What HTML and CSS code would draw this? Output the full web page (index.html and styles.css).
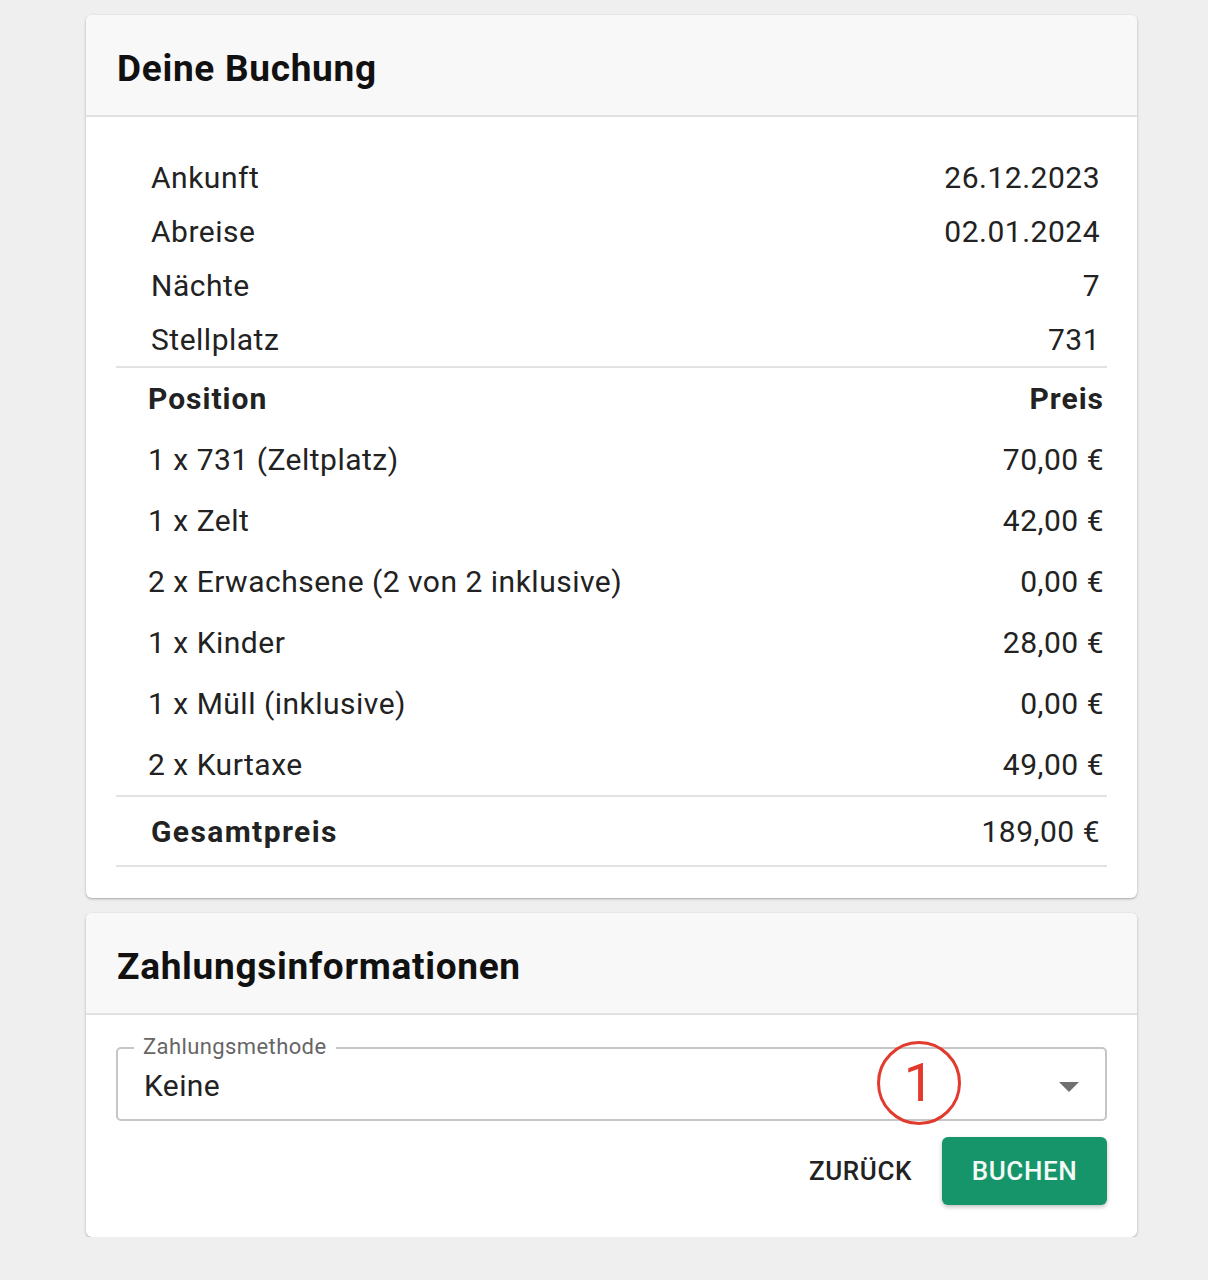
FILE: index.html
```html
<!DOCTYPE html>
<html lang="de">
<head>
<meta charset="utf-8">
<title>Buchung</title>
<link rel="stylesheet" href="styles.css">
</head>
<body>
<main class="page">
  <section class="card">
    <header class="card-header"><h2 class="card-title">Deine Buchung</h2></header>
    <div class="card-body">
      <div class="info">
        <div class="info-row"><span>Ankunft</span><span>26.12.2023</span></div>
        <div class="info-row"><span>Abreise</span><span>02.01.2024</span></div>
        <div class="info-row"><span>Nächte</span><span>7</span></div>
        <div class="info-row"><span>Stellplatz</span><span>731</span></div>
      </div>
      <div class="positions">
        <div class="pos-row pos-head"><span>Position</span><span>Preis</span></div>
        <div class="pos-row"><span>1 x 731 (Zeltplatz)</span><span>70,00 €</span></div>
        <div class="pos-row"><span>1 x Zelt</span><span>42,00 €</span></div>
        <div class="pos-row"><span>2 x Erwachsene (2 von 2 inklusive)</span><span>0,00 €</span></div>
        <div class="pos-row"><span>1 x Kinder</span><span>28,00 €</span></div>
        <div class="pos-row"><span>1 x Müll (inklusive)</span><span>0,00 €</span></div>
        <div class="pos-row"><span>2 x Kurtaxe</span><span>49,00 €</span></div>
      </div>
      <div class="total-row"><span class="total-label">Gesamtpreis</span><span>189,00 €</span></div>
    </div>
  </section>

  <section class="card">
    <header class="card-header"><h2 class="card-title">Zahlungsinformationen</h2></header>
    <div class="card-body pay-body">
      <div class="select">
        <span class="select-label">Zahlungsmethode</span>
        <span class="select-value">Keine</span>
        <span class="select-arrow"></span>
        <span class="marker">1</span>
      </div>
      <div class="actions">
        <button class="btn btn-text">ZURÜCK</button>
        <button class="btn btn-primary">BUCHEN</button>
      </div>
    </div>
  </section>
</main>
</body>
</html>
```

FILE: styles.css
```css
* { box-sizing: border-box; }
html, body { margin: 0; padding: 0; }
body {
  background: #efefef;
  font-family: Roboto, "Liberation Sans", Arial, sans-serif;
  color: #222;
}
.page {
  width: 1051px;
  margin-left: 86px;
  padding-top: 15px;
  display: flex;
  flex-direction: column;
  gap: 15px;
}
.card {
  background: #fff;
  border-radius: 6px;
  box-shadow: 0 1px 3px rgba(0,0,0,0.25), 0 1px 1px rgba(0,0,0,0.08);
}
.card-header {
  background: #f8f8f8;
  height: 102px;
  border-bottom: 2px solid #e2e2e2;
  border-radius: 6px 6px 0 0;
  display: flex;
  align-items: center;
  padding-left: 31px;
}
.card-title {
  margin: 0;
  font-size: 37px;
  font-weight: 700;
  color: #111;
  letter-spacing: 0.7px;
  padding-top: 7px;
}
.card-body {
  padding: 33px 30px 31px 30px;
}
.info {
  border-bottom: 2px solid #e2e2e2;
}
.info-row {
  display: flex;
  justify-content: space-between;
  align-items: center;
  height: 54px;
  padding: 0 7px 0 35px;
  font-size: 30px;
  letter-spacing: 0.5px;
  color: #222;
}
.positions {
  border-bottom: 2px solid #e2e2e2;
}
.pos-row {
  display: flex;
  justify-content: space-between;
  align-items: center;
  height: 61px;
  padding: 0 3px 0 32px;
  font-size: 30px;
  letter-spacing: 0.5px;
  color: #222;
}
.pos-head {
  font-weight: 700;
  letter-spacing: 1px;
}
.total-row {
  display: flex;
  justify-content: space-between;
  align-items: center;
  height: 70px;
  padding: 0 7px 0 35px;
  font-size: 30px;
  letter-spacing: 0.5px;
  border-bottom: 2px solid #e2e2e2;
}
.total-label { font-weight: 700; letter-spacing: 1.4px; }

.pay-body {
  padding-top: 32px;
  padding-bottom: 32px;
  display: flex;
  flex-direction: column;
  gap: 16px;
}
.select {
  position: relative;
  height: 74px;
  border: 2px solid #c6c6c6;
  border-radius: 5px;
  display: flex;
  align-items: center;
  padding-left: 26px;
}
.select-label {
  position: absolute;
  left: 16px;
  top: -16px;
  padding: 0 9px;
  background: #fff;
  font-size: 22px;
  letter-spacing: 0.4px;
  color: #666;
  line-height: 28px;
}
.select-value {
  font-size: 30px;
  letter-spacing: 0.4px;
  color: #222;
  padding-top: 2px;
}
.select-arrow {
  position: absolute;
  right: 26px;
  top: 33px;
  width: 0;
  height: 0;
  border-left: 10px solid transparent;
  border-right: 10px solid transparent;
  border-top: 10px solid #707070;
}
.marker {
  position: absolute;
  left: 759px;
  top: -8px;
  width: 84px;
  height: 84px;
  border: 3px solid #e23a2c;
  border-radius: 50%;
  color: #e23a2c;
  font-size: 54px;
  line-height: 78px;
  text-align: center;
  font-weight: 400;
}
.actions {
  display: flex;
  justify-content: flex-end;
  align-items: center;
  gap: 30px;
}
.btn {
  font-family: Roboto, "Liberation Sans", Arial, sans-serif;
  font-size: 26px;
  font-weight: 500;
  border: none;
  cursor: pointer;
  letter-spacing: 0.6px;
}
.btn-text {
  background: transparent;
  color: #222;
  padding: 0;
}
.btn-primary {
  width: 165px;
  height: 68px;
  background: #17956a;
  color: #f4fbf7;
  border-radius: 6px;
  box-shadow: 0 2px 4px rgba(0,0,0,0.25);
}
```
